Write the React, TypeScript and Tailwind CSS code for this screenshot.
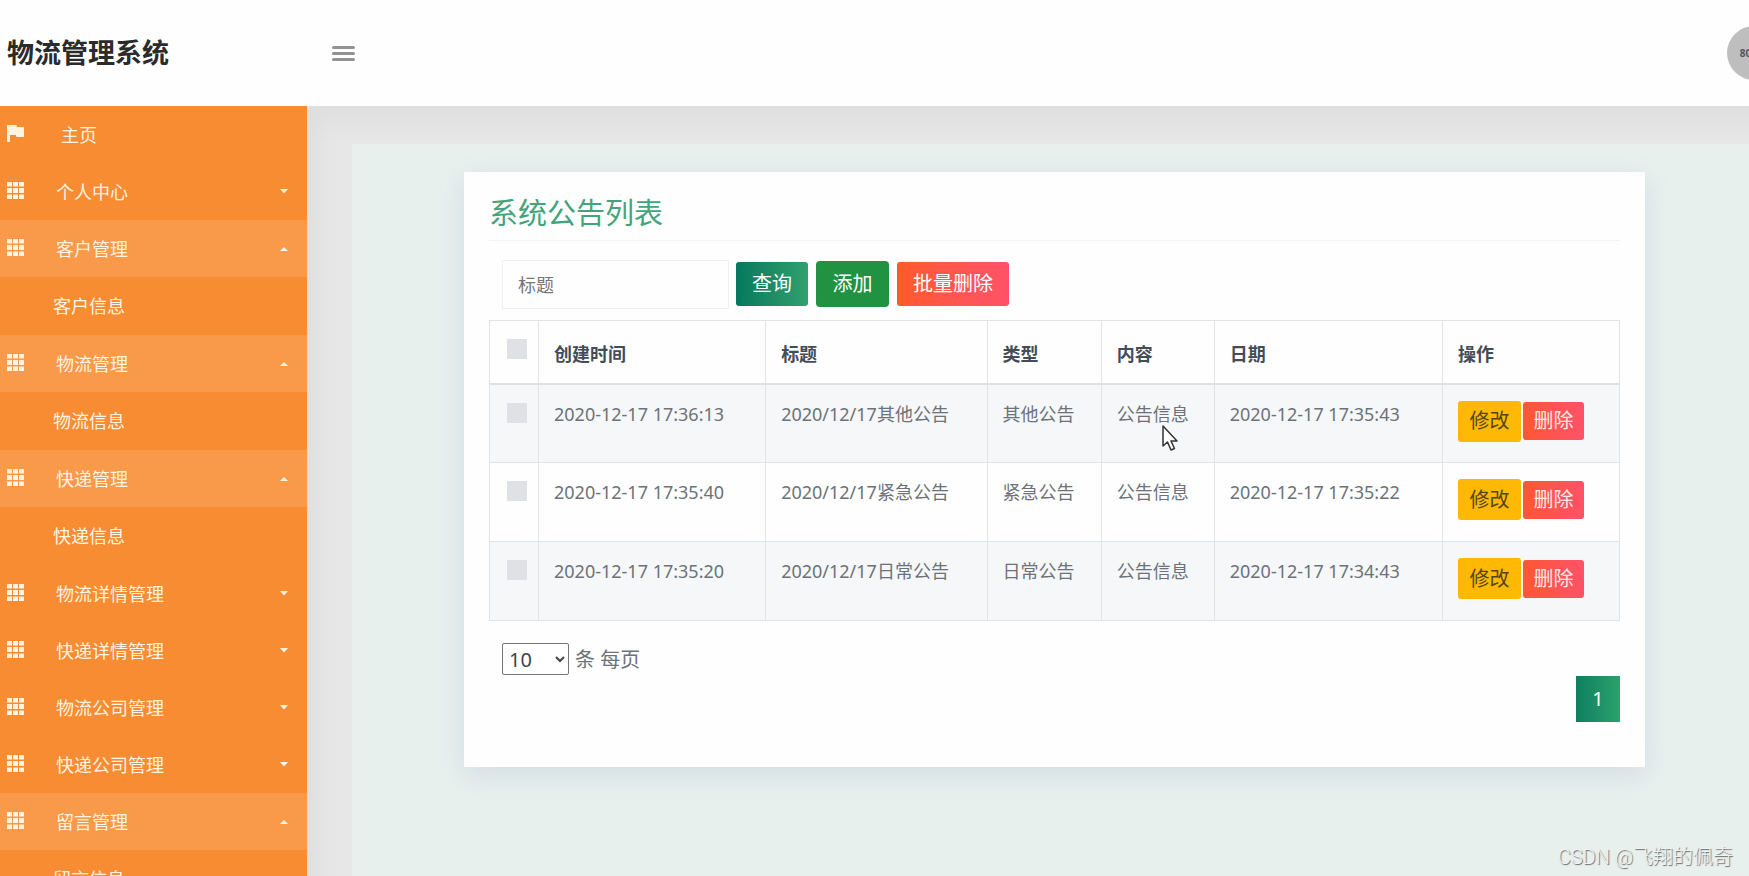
import { useState } from "react";
import clsx from "clsx";

type MenuItem = { name: string; open?: boolean; children?: string[] };

const menus: MenuItem[] = [
  { name: "个人中心" },
  { name: "客户管理", open: true, children: ["客户信息"] },
  { name: "物流管理", open: true, children: ["物流信息"] },
  { name: "快递管理", open: true, children: ["快递信息"] },
  { name: "物流详情管理" },
  { name: "快递详情管理" },
  { name: "物流公司管理" },
  { name: "快递公司管理" },
  { name: "留言管理", open: true, children: ["留言信息"] },
];

const notices = [
  { created: "2020-12-17 17:36:13", title: "2020/12/17其他公告", type: "其他公告", content: "公告信息", date: "2020-12-17 17:35:43" },
  { created: "2020-12-17 17:35:40", title: "2020/12/17紧急公告", type: "紧急公告", content: "公告信息", date: "2020-12-17 17:35:22" },
  { created: "2020-12-17 17:35:20", title: "2020/12/17日常公告", type: "日常公告", content: "公告信息", date: "2020-12-17 17:34:43" },
];

const cell = "border border-[#e1e4e7] px-[15px]";
const boxCell = "border border-[#e1e4e7] pt-[18px] pl-[17px] align-top";
const box = "block size-5 appearance-none bg-[#dfe1e4] checked:bg-[#00796b]";

function FlagIcon() {
  return (
    <svg viewBox="0 0 17 17" className="mb-[2px] size-[17px]" fill="currentColor" aria-hidden="true">
      <path d="M0 0h9.500l.6 2H17v10H9.500l-.6-2H3v7H0z" />
    </svg>
  );
}

function GridIcon() {
  return (
    <svg viewBox="0 0 17 17" className="mb-[2px] size-[17px]" fill="currentColor" aria-hidden="true">
      <path d="M0 0h5v4.500H0zM6 0h5v4.500H6zM12 0h5v4.500h-5zM0 6h5v5H0zM6 6h5v5H6zM12 6h5v5h-5zM0 12.500h5V17H0zM6 12.500h5V17H6zM12 12.500h5V17h-5z" />
    </svg>
  );
}

function Caret({ up }: { up?: boolean }) {
  return (
    <svg viewBox="0 0 10 5" className="h-[5px] w-[10px]" fill="currentColor" aria-hidden="true">
      <path d={up ? "M1 5l4-4 4 4z" : "M1 0l4 4.500L9 0z"} />
    </svg>
  );
}

function Header() {
  return (
    <header className="flex h-[106px] shrink-0 items-center overflow-hidden bg-[#fefefe] pl-[7px]">
      <h1 className="w-[325px] text-[27px] leading-8 font-bold text-[#2b2b2b]">物流管理系统</h1>
      <button type="button" aria-label="菜单" className="flex w-[23px] flex-col gap-[3px]">
        <span className="h-[3px] rounded-full bg-[#929292]" />
        <span className="h-[3px] rounded-full bg-[#929292]" />
        <span className="h-[3px] rounded-full bg-[#929292]" />
      </button>
      {/* Avatar */}
      <div className="-mr-8 ml-auto flex size-[54px] shrink-0 items-center justify-center rounded-full bg-[#bebebe] text-[10px] font-bold text-[#555]">
        80x80
      </div>
    </header>
  );
}

function Sidebar() {
  return (
    <nav className="w-[307px] shrink-0 overflow-hidden bg-[#f88c32] text-[18px] leading-6 text-[#fff3e2]">
      <a href="#home" className="flex h-[57px] items-center pl-[7px]">
        <FlagIcon />
        <span className="pl-[37px]">主页</span>
      </a>
      {menus.map((m) => (
        <div key={m.name}>
          <a href="#menu" className={clsx("flex h-[57px] items-center pr-[18px] pl-[7px]", m.open && "bg-[#f9994a]")}>
            <GridIcon />
            <span className="flex-1 pl-8">{m.name}</span>
            <Caret up={m.open} />
          </a>
          {m.children?.map((c) => (
            <a key={c} href="#sub" className="flex h-[58px] items-center pl-[53px]">
              {c}
            </a>
          ))}
        </div>
      ))}
    </nav>
  );
}

function NoticeTable() {
  return (
    <table className="mt-[11px] w-full table-fixed border-collapse text-left text-[18px] leading-6 text-[#6c7278]">
      <colgroup>
        <col className="w-[49px]" />
        <col className="w-[20.1%]" />
        <col className="w-[19.6%]" />
        <col className="w-[10.1%]" />
        <col className="w-[10%]" />
        <col className="w-[20.2%]" />
        <col />
      </colgroup>
      <thead>
        <tr className="h-[63px] border-b-2 border-[#dee0e3] text-[#444c56]">
          <th className={boxCell}>
            <input type="checkbox" aria-label="全选" className={box} />
          </th>
          {["创建时间", "标题", "类型", "内容", "日期", "操作"].map((h) => (
            <th key={h} className={clsx(cell, "pt-1 font-bold")}>{h}</th>
          ))}
        </tr>
      </thead>
      <tbody>
        {notices.map((n) => (
          <tr key={n.created} className="h-[79px] align-top odd:bg-[#f6f7f9]">
            <td className={boxCell}>
              <input type="checkbox" aria-label={n.title} className={box} />
            </td>
            <td className={clsx(cell, "pt-[17px]")}>{n.created}</td>
            <td className={clsx(cell, "pt-[17px]")}>{n.title}</td>
            <td className={clsx(cell, "pt-[17px]")}>{n.type}</td>
            <td className={clsx(cell, "pt-[17px]")}>{n.content}</td>
            <td className={clsx(cell, "pt-[17px]")}>{n.date}</td>
            <td className={clsx(cell, "pt-4")}>
              <div className="flex items-center gap-[2px] text-[20px]">
                <button type="button" className="h-[41px] w-[63px] rounded-[3px] bg-[#ffb905] text-[#54450f]">修改</button>
                <button type="button" className="h-[38px] w-[61px] rounded-[3px] bg-linear-to-r from-[#ff5730] to-[#ff5268] text-[#ffe9e6]">删除</button>
              </div>
            </td>
          </tr>
        ))}
      </tbody>
    </table>
  );
}

export default function App() {
  const [keyword, setKeyword] = useState("");

  return (
    <div className="relative flex h-screen flex-col overflow-hidden bg-[#e6e6e6] font-['Noto_Sans','Noto_Sans_CJK_SC',sans-serif]">
      <Header />
      <div className="flex min-h-0 flex-1">
        <Sidebar />
        <div className="flex flex-1 bg-linear-to-r from-[#dfdfdf] to-[#e7e7e7] to-[24px]">
          <div className="flex flex-1 flex-col bg-linear-to-b from-[#dfdfdf] to-transparent to-[38px] pt-[38px] pl-[45px]">
            <main className="flex-1 bg-[#e7f0ed] pt-7 pr-[104px] pl-28">
              {/* Notice list card */}
              <section className="bg-[#fefefe] px-[25px] pt-6 pb-[45px] shadow-[0_8px_24px_rgba(140,150,190,0.2)]">
                <h2 className="text-[29px] leading-[34px] text-[#43a47c]">系统公告列表</h2>
                <hr className="mt-[10px] border-[#f3f3f3]" />
                <form className="mt-[19px] flex items-center gap-[7px] pl-[13px] text-[20px] text-white" onSubmit={(e) => e.preventDefault()}>
                  <input
                    aria-label="标题"
                    placeholder="标题"
                    value={keyword}
                    onChange={(e) => setKeyword(e.target.value)}
                    className="h-[49px] w-[227px] border border-[#eef0f1] px-[15px] text-[18px] text-[#666] placeholder:text-[#777]"
                  />
                  <div className="flex items-center gap-2 pb-[2px]">
                    <button type="submit" className="h-11 w-[72px] rounded-[3px] bg-linear-to-r from-[#04785d] to-[#2fa16d]">查询</button>
                    <button type="button" className="h-[46px] w-[73px] rounded-[4px] bg-[#219242]">添加</button>
                    <button type="button" className="h-11 w-[112px] rounded-[3px] bg-linear-to-r from-[#ff5a28] to-[#ff5268]">批量删除</button>
                  </div>
                </form>
                <NoticeTable />
                <label className="mt-[21px] flex items-center gap-[6px] pl-[13px] text-[20px] leading-8 text-[#6c7278]">
                  <select defaultValue="10" className="h-8 w-[67px] rounded-[2px] border border-[#767676] bg-white pl-[2px] text-[#444]">
                    <option>10</option>
                    <option>25</option>
                    <option>50</option>
                  </select>
                  <span className="pt-[2px]">条 每页</span>
                </label>
                <div className="flex justify-end">
                  <a href="#page-1" className="flex h-[46px] w-11 items-center justify-center bg-linear-to-r from-[#0b7f60] to-[#2ba26c] text-[20px] text-white">
                    1
                  </a>
                </div>
              </section>
            </main>
          </div>
        </div>
      </div>

      {/* Mouse pointer */}
      <svg viewBox="0 0 16 26" className="absolute top-[425px] left-[1162px] h-[26px] w-4" aria-hidden="true">
        <path d="M1 1v20l4.500-4 3.500 8 3.500-1.500-3.500-7.500H15z" fill="#fff" stroke="#333" strokeWidth="1.500" strokeLinejoin="round" />
      </svg>
      <p className="absolute right-4 bottom-[7px] font-['Roboto','Noto_Sans_CJK_SC',sans-serif] text-[20px] leading-6 font-light text-[#f2f2f2] [text-shadow:1px_1px_1px_#666]">
        CSDN @飞翔的佩奇
      </p>
    </div>
  );
}
